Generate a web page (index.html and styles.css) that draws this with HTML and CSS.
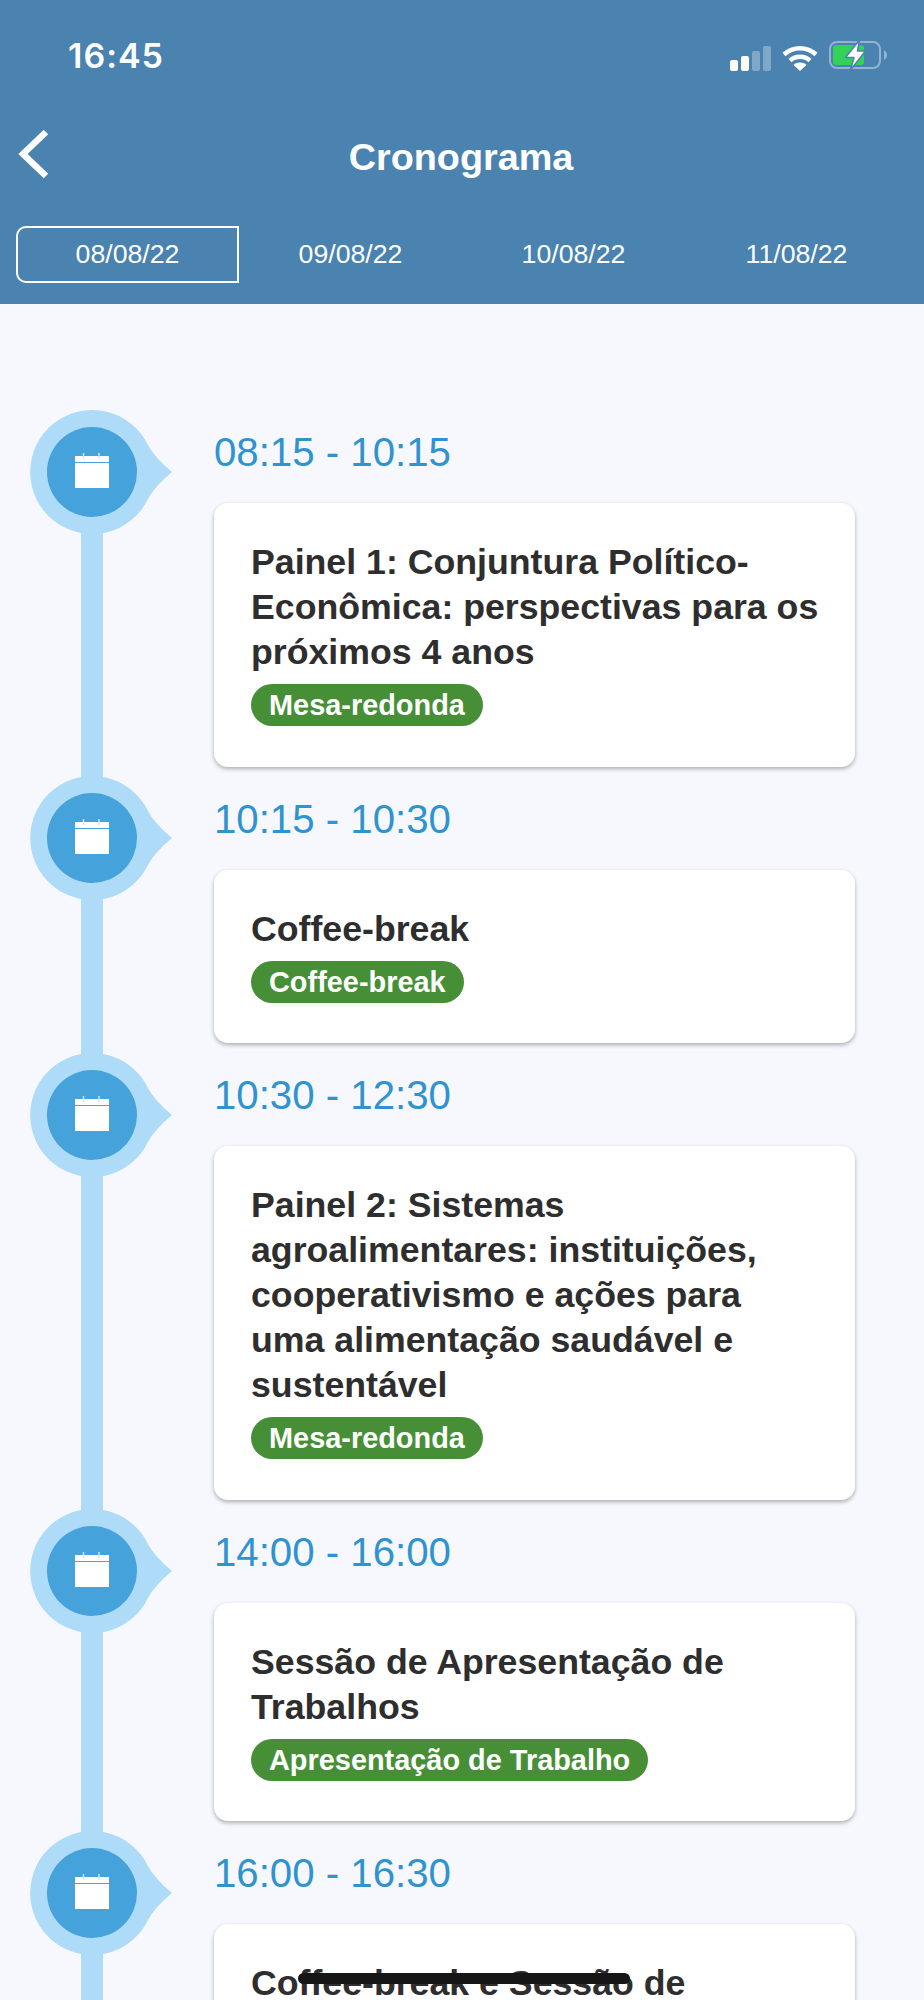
FILE: index.html
```html
<!DOCTYPE html>
<html lang="pt-BR">
<head>
  <meta charset="UTF-8">
  <meta name="viewport" content="width=device-width, initial-scale=1.0">
  <title>Cronograma</title>
  <link rel="stylesheet" href="styles.css">
</head>
<body>
  <!-- shared timeline pin -->
  <svg class="defs" width="0" height="0">
    <symbol id="pin" viewBox="0 0 142 124">
      <path fill="#aedbf8" d="M118 35Q124 47 142 62Q124 77 118 89A62 62 0 1 1 118 35Z"/>
      <circle cx="62" cy="62" r="45" fill="#46a2db"/>
      <path fill="#fff" d="M45 46h34v32H45z"/>
      <path fill="#46a2db" d="M45 52h34v1H45z"/>
      <path stroke="#cfe6f6" stroke-width="1.5" d="M53.500 43v6M69 43v6"/>
    </symbol>
  </svg>

  <header class="top">
    <div class="status">
      <span class="clock">16:45</span>
      <div class="status-icons">
        <svg class="signal" width="41" height="25" viewBox="0 0 41 25">
          <rect x="0" y="14" width="8" height="11" rx="2" fill="#fff"/>
          <rect x="11" y="10" width="8" height="15" rx="2" fill="#fff"/>
          <rect x="22" y="5" width="8" height="20" rx="2" fill="#fff" opacity=".3"/>
          <rect x="33" y="0" width="8" height="25" rx="2" fill="#fff" opacity=".3"/>
        </svg>
        <svg class="wifi" width="36" height="28" viewBox="0 0 36 28">
          <path fill="none" stroke="#fff" stroke-width="4.500" d="M2 11.500C11 3 25 3 34 11.500M8 17.500C13.500 12.500 22.500 12.500 28 17.500"/>
          <path fill="#fff" d="M18 28L11.500 22C15 18.800 21 18.800 24.500 22Z"/>
        </svg>
        <svg class="battery" width="58" height="32" viewBox="0 0 58 32">
          <rect x="1" y="3" width="50" height="26" rx="7" fill="none" stroke="#fff" stroke-opacity=".4" stroke-width="2"/>
          <rect x="4" y="6" width="31" height="20" rx="3" fill="#33d158"/>
          <path d="M55 11c2 1 3 3 3 5s-1 4-3 5z" fill="#fff" opacity=".4"/>
          <path fill="#fff" stroke="#4a82b0" stroke-width="1.500" stroke-linejoin="round" d="M30.500 1L16.500 18.500h8.500L21.500 31 36.500 12h-8z"/>
        </svg>
      </div>
    </div>
    <div class="nav">
      <svg class="back" width="32" height="50" viewBox="0 0 32 50">
        <path fill="none" stroke="#fff" stroke-width="6.500" d="M28 3L5 25l23 22"/>
      </svg>
      <h1>Cronograma</h1>
    </div>
    <div class="tabs">
      <a class="tab active">08/08/22</a>
      <a class="tab">09/08/22</a>
      <a class="tab">10/08/22</a>
      <a class="tab">11/08/22</a>
    </div>
  </header>

  <main class="timeline">
    <section class="entry">
      <svg class="pin"><use href="#pin"/></svg>
      <div class="entry-body">
        <div class="hours">08:15 - 10:15</div>
        <div class="card">
          <h3>Painel 1: Conjuntura Político-Econômica: perspectivas para os próximos 4 anos</h3>
          <span class="badge">Mesa-redonda</span>
        </div>
      </div>
    </section>

    <section class="entry">
      <svg class="pin"><use href="#pin"/></svg>
      <div class="entry-body">
        <div class="hours">10:15 - 10:30</div>
        <div class="card">
          <h3>Coffee-break</h3>
          <span class="badge">Coffee-break</span>
        </div>
      </div>
    </section>

    <section class="entry">
      <svg class="pin"><use href="#pin"/></svg>
      <div class="entry-body">
        <div class="hours">10:30 - 12:30</div>
        <div class="card">
          <h3>Painel 2: Sistemas agroalimentares: instituições, cooperativismo e ações para uma alimentação saudável e sustentável</h3>
          <span class="badge">Mesa-redonda</span>
        </div>
      </div>
    </section>

    <section class="entry">
      <svg class="pin"><use href="#pin"/></svg>
      <div class="entry-body">
        <div class="hours">14:00 - 16:00</div>
        <div class="card">
          <h3>Sessão de Apresentação de Trabalhos</h3>
          <span class="badge">Apresentação de Trabalho</span>
        </div>
      </div>
    </section>

    <section class="entry">
      <svg class="pin"><use href="#pin"/></svg>
      <div class="entry-body">
        <div class="hours">16:00 - 16:30</div>
        <div class="card">
          <h3>Coffee-break e Sessão de</h3>
        </div>
      </div>
    </section>
  </main>

  <div class="home-bar"></div>
</body>
</html>
```

FILE: styles.css
```css
html, body {
  height: 2000px;
  overflow: hidden;
}
body {
  position: relative;
  margin: 0;
  font-family: "Liberation Sans", Arial, sans-serif;
  background: #f7f8fe;
  color: #2e2e2e;
}
.defs { position: absolute; }

/* blue header */
.top {
  height: 304px;
  background: #4a82b0;
  color: #fff;
}
.status {
  display: flex;
  justify-content: space-between;
  align-items: center;
  height: 110px;
  padding: 0 37px 0 68px;
}
.clock {
  font-family: Inter, "Liberation Sans", sans-serif;
  font-size: 34px;
  font-weight: 600;
  letter-spacing: 1px;
}
.status-icons {
  display: flex;
  align-items: flex-end;
  gap: 11px;
}
.nav {
  display: flex;
  align-items: center;
  justify-content: center;
  position: relative;
  height: 92px;
}
.nav h1 {
  margin: 0 0 0 -2px;
  font-size: 37.800px;
  font-weight: bold;
  transform: translateY(1px);
}
.back {
  position: absolute;
  left: 18px;
  top: 19px;
}
.tabs {
  display: grid;
  grid-template-columns: repeat(4, 223px);
  margin: 24px 0 0 16px;
}
.tab {
  display: flex;
  align-items: center;
  justify-content: center;
  height: 57px;
  font-size: 26.700px;
  box-sizing: border-box;
}
.tab.active {
  border: 2px solid #fff;
  border-radius: 10px 0 0 10px;
}

/* timeline */
.timeline {
  position: relative;
  padding-top: 125px;
}
.timeline::before {
  content: "";
  position: absolute;
  left: 81px;
  top: 168px;
  bottom: 0;
  width: 22px;
  background: #aedbf8;
}
.entry {
  display: grid;
  grid-template-columns: 214px 641px;
  margin-bottom: 29px;
}
.pin {
  position: relative;
  width: 142px;
  height: 124px;
  margin: -19.500px 0 0 29.500px;
}
.hours {
  height: 46px;
  margin-bottom: 28px;
  font-size: 40.200px;
  line-height: 47px;
  color: #2f93cf;
}
.card {
  padding: 37px 34px 40.500px 37px;
  background: #fff;
  border-radius: 14px;
  box-shadow: 0 2px 4px rgba(0, 0, 0, .3);
}
.card h3 {
  margin: 0;
  font-size: 35.700px;
  line-height: 45px;
  font-weight: bold;
}
.badge {
  display: inline-block;
  margin-top: 9px;
  padding: 0 18px;
  height: 42px;
  border-radius: 21px;
  background: #478f37;
  color: #fff;
  font-size: 28.900px;
  font-weight: bold;
  line-height: 42px;
}

.home-bar {
  position: absolute;
  left: 298px;
  top: 1973px;
  width: 332px;
  height: 11px;
  border-radius: 6px;
  background: #161616;
}
```
